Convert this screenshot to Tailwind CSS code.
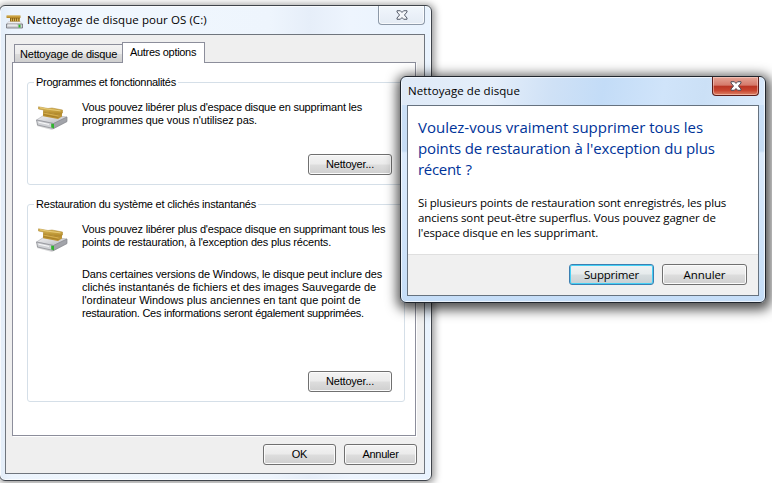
<!DOCTYPE html>
<html lang="fr">
<head>
<meta charset="utf-8">
<title>Nettoyage de disque</title>
<script src="https://cdn.jsdelivr.net/npm/@tailwindcss/browser@4"></script>
</head>
<body class="relative h-[483px] w-[772px] overflow-hidden bg-white font-['Liberation_Sans',sans-serif] text-[11px] leading-[13px] text-black">

<svg class="absolute h-0 w-0">
  <defs>
    <linearGradient id="metal" x1="0" y1="0" x2="1" y2="1"><stop offset="0" stop-color="#f4f4f6"/><stop offset="1" stop-color="#b9bbc0"/></linearGradient>
    <linearGradient id="brass" x1="0" y1="0" x2="0" y2="1"><stop offset="0" stop-color="#dfbd5c"/><stop offset="1" stop-color="#ad8424"/></linearGradient>
    <symbol id="drive" viewBox="0 0 32 24">
      <path d="M1 16v4l15 4 15-8v-4z" fill="#77797f" opacity=".3"/>
      <path d="M.5 14 9 8.500 31 11 17.500 17.500z" fill="url(#metal)" stroke="#b4b6bb" stroke-width=".7"/>
      <path d="M.5 14 17.500 17.500V22.500L1.500 19z" fill="#d0d2d6" stroke="#85878d" stroke-width=".7"/>
      <path d="M17.500 17.500 31 11V15.500L17.500 22.500z" fill="#a2a4aa" stroke="#85878d" stroke-width=".7"/>
      <path d="M2.500 16.200 13 18.400" stroke="#f9f9fa" stroke-width="1"/>
      <path d="M15.200 17.400 18 18v4.200l-2.800-.8z" fill="#2fb52d"/>
      <path d="M7 5.500 23 8.500 26 6.500V10.500L22 13 7 10.300z" fill="#bd9436"/>
      <path d="M7.500 8.600 22.500 11.500" stroke="#9c7520" stroke-width=".7"/>
      <path d="M7.500 7 22.500 10" stroke="#dcb857" stroke-width=".8"/>
      <path d="M2.500 .8 12 2.500 16 2 26.500 4V7L23 8.800 7.500 6 7.500 4 2.500 3z" fill="url(#brass)" stroke="#a9822c" stroke-width=".5"/>
      <path d="M4 1.700 12.500 3.300 24.500 4.900" stroke="#eed383" stroke-width=".8" fill="none"/>
    </symbol>
    <symbol id="drive-small" viewBox="0 0 17 14">
      <path d="M2.500 6.500h12l2 3H.500z" fill="#efeff1" stroke="#bcbec3" stroke-width=".5"/>
      <path d="M.500 9h16v4h-16z" fill="#cfd1d5" stroke="#6e7076" stroke-width=".8"/>
      <path d="M1.500 10h10" stroke="#fff"/>
      <path d="M12.500 9.700h2v2.800h-2z" fill="#2fb52d"/>
      <path d="M0.500.500h14v2.500h-14z" fill="#b98d2d"/>
      <path d="M1 1h13" stroke="#e4c165" stroke-width=".8"/>
      <path d="M4 3h10v3.500H4z" fill="#8c6618"/>
      <path d="M5.500 3.500v3M7.500 3.500v3M9.500 3.500v3M11.500 3.500v3M13.200 3.500v3" stroke="#e0bb5c" stroke-width=".9"/>
    </symbol>
    <symbol id="close" viewBox="0 0 13 11">
      <path d="M1 .8h3.700L6.500 2.700 8.300.8H12v1.400L9.200 5.500 12 8.800v1.400H8.300L6.500 8.300 4.700 10.200H1V8.800l2.800-3.300L1 2.200z" stroke-width="1.1" stroke-linejoin="round"/>
    </symbol>
  </defs>
</svg>

<!-- Main window -->
<main class="absolute -left-px top-[5px] flex h-[476px] w-[433px] flex-col rounded-[6px] border border-[#3f444b] bg-[linear-gradient(90deg,#e3edf8_0,#ecf4fd_12px,#f0f7fe_100px,#eef5fd_270px,#e6eef9_310px,#eef5fe_350px,#e9f3fe_100%)] pr-[6px] pb-[6px] pl-[5px] shadow-[1px_1px_7px_2px_rgba(0,0,0,0.38),inset_0_0_0_1px_rgba(255,255,255,0.7)]">
  <header class="flex h-[28px] shrink-0 items-start">
    <svg class="mt-[9px] ml-[1px] h-[14px] w-[17px]"><use href="#drive-small"/></svg>
    <h1 class="mt-[6px] ml-[4px] font-['Open_Sans',sans-serif] text-[11.5px] leading-4 tracking-[0.07px]">Nettoyage de disque pour OS (C:)</h1>
    <div class="ml-auto flex h-[19px] w-[47px] justify-center rounded-b-[4px] border border-t-0 border-[#8d99a8] bg-[linear-gradient(#f1f6fc,#e4ebf4)] pt-[4px] shadow-[inset_0_0_0_1px_rgba(255,255,255,0.7)]">
      <svg class="h-[10px] w-[12px] fill-[#f4f6f9] stroke-[#565d6b]"><use href="#close"/></svg>
    </div>
  </header>

  <section class="flex h-[440px] flex-col border border-[#6f757d] bg-[#efefef] px-[6px]">
    <nav class="relative z-10 mt-[7px] flex h-[21px] items-end pl-[2px]">
      <div class="mb-px h-[18px] w-[109px] border border-b-0 border-[#8c8e9b] bg-[linear-gradient(#f3f3f3_0,#ebebeb_50%,#dddddd_51%,#cfcfcf_100%)] pt-[3px] pl-[5px] tracking-[-0.2px] whitespace-nowrap">Nettoyage de disque</div>
      <div class="-ml-px h-[21px] w-[83px] border border-b-0 border-[#8c8e9b] bg-white pt-[3px] pl-[7px] tracking-[-0.3px] whitespace-nowrap">Autres options</div>
    </nav>
    <div class="-mt-px flex h-[374px] w-[404px] flex-col border border-[#8c8e9b] bg-white px-[14px] shadow-[1px_1px_0_#fff]">
      <fieldset class="mt-[13px] h-[109px] w-[378px] rounded-[3px] border border-[#d5dfe8]">
        <legend class="-mt-[7px] ml-[6px] block h-[13px] px-[2px] tracking-[-0.3px]">Programmes et fonctionnalités</legend>
        <div class="flex flex-col">
          <div class="mt-[12px] flex">
            <svg class="mt-[5px] ml-[8px] h-[24px] w-[32px] shrink-0"><use href="#drive"/></svg>
            <p class="ml-[14px] whitespace-nowrap"><span class="block tracking-[-0.205px]">Vous pouvez libérer plus d'espace disque en supprimant les</span><span class="block tracking-[-0.09px]">programmes que vous n'utilisez pas.</span></p>
          </div>
          <button class="mt-[24px] mr-[12px] h-[21px] w-[84px] self-end rounded-[3px] border border-[#707070] bg-[linear-gradient(#f3f3f3_0,#ebebeb_48%,#dddddd_52%,#cfcfcf_100%)] tracking-[-0.19px] shadow-[inset_0_0_0_1px_#fbfbfb]">Nettoyer...</button>
        </div>
      </fieldset>
      <fieldset class="mt-[13px] h-[204px] w-[378px] rounded-[3px] border border-[#d5dfe8]">
        <legend class="-mt-[7px] ml-[6px] block h-[13px] px-[2px] tracking-[-0.215px]">Restauration du système et clichés instantanés</legend>
        <div class="flex flex-col">
          <div class="mt-[12px] flex">
            <svg class="mt-[5px] ml-[8px] h-[24px] w-[32px] shrink-0"><use href="#drive"/></svg>
            <div class="ml-[14px] whitespace-nowrap">
              <p><span class="block tracking-[-0.2px]">Vous pouvez libérer plus d'espace disque en supprimant tous les</span><span class="block tracking-[-0.18px]">points de restauration, à l'exception des plus récents.</span></p>
              <p class="mt-[19px]"><span class="block tracking-[-0.18px]">Dans certaines versions de Windows, le disque peut inclure des</span><span class="block tracking-[-0.02px]">clichés instantanés de fichiers et des images Sauvegarde de</span><span class="block">l'ordinateur Windows plus anciennes en tant que point de</span><span class="block tracking-[-0.27px]">restauration. Ces informations seront également supprimées.</span></p>
            </div>
          </div>
          <button class="mt-[51px] mr-[12px] h-[21px] w-[84px] self-end rounded-[3px] border border-[#707070] bg-[linear-gradient(#f3f3f3_0,#ebebeb_48%,#dddddd_52%,#cfcfcf_100%)] tracking-[-0.19px] shadow-[inset_0_0_0_1px_#fbfbfb]">Nettoyer...</button>
        </div>
      </fieldset>
    </div>
    <footer class="mt-[8px] flex justify-end gap-[8px] pr-px">
      <button class="h-[21px] w-[73px] rounded-[3px] border border-[#707070] bg-[linear-gradient(#f3f3f3_0,#ebebeb_48%,#dddddd_52%,#cfcfcf_100%)] tracking-[-0.2px] shadow-[inset_0_0_0_1px_#fbfbfb]">OK</button>
      <button class="h-[21px] w-[73px] rounded-[3px] border border-[#707070] bg-[linear-gradient(#f3f3f3_0,#ebebeb_48%,#dddddd_52%,#cfcfcf_100%)] tracking-[-0.25px] shadow-[inset_0_0_0_1px_#fbfbfb]">Annuler</button>
    </footer>
  </section>
</main>

<!-- Confirmation dialog -->
<div role="dialog" class="absolute top-[76px] left-[400px] z-20 flex h-[227px] w-[366px] flex-col rounded-[6px] border border-[#20262e] bg-[linear-gradient(#cfe3f9_0,#c6dcf4_74px,#dcebfc_76px,#c5ddf7_100%)] px-[6px] pb-[6px] font-['Open_Sans',sans-serif] text-[11.5px] shadow-[1px_3px_12px_4px_rgba(0,0,0,0.68),inset_0_0_0_1px_rgba(255,255,255,0.65)]">
  <header class="-mx-[5px] mt-px flex h-[27px] shrink-0 items-start rounded-t-[4px] bg-[linear-gradient(100deg,#dfeaf7_0,#e4eefa_90px,#cfe1f6_150px,#c3dcf7_200px,#d0e4fa_260px,#cbe0f6_300px,#d9e9fb_100%)] pr-[5px] pl-[6px]">
    <h2 class="mt-[5px] leading-4 tracking-[0.08px]">Nettoyage de disque</h2>
    <div class="-mt-px ml-auto flex h-[19px] w-[47px] justify-center rounded-b-[4px] border border-t-0 border-[#5b1d1a] bg-[linear-gradient(#e5a597_0,#d5796a_46%,#b93524_50%,#c8452f_75%,#dd8468_100%)] pt-[4px] shadow-[inset_0_0_0_1px_rgba(255,220,210,0.5)]">
      <svg class="h-[10px] w-[12px] fill-white stroke-[#4d4a55]"><use href="#close"/></svg>
    </div>
  </header>
  <section class="flex h-[191px] flex-col border border-[#66727f] bg-white whitespace-nowrap">
    <div class="h-[148px] pt-[11px] pl-[10px]">
      <p class="text-[15px] leading-[21px] text-[#003399]"><span class="block tracking-[-0.01px]">Voulez-vous vraiment supprimer tous les</span><span class="block tracking-[-0.13px]">points de restauration à l'exception du plus</span><span class="block tracking-[-0.3px] [word-spacing:1px]">récent ?</span></p>
      <p class="mt-[15px] leading-[15px]"><span class="block tracking-[-0.18px]">Si plusieurs points de restauration sont enregistrés, les plus</span><span class="block tracking-[-0.11px]">anciens sont peut-être superflus. Vous pouvez gagner de</span><span class="block tracking-[-0.13px]">l'espace disque en les supprimant.</span></p>
    </div>
    <footer class="flex grow justify-end gap-[8px] border-t border-[#dfdfdf] bg-[#f0f0f0] pt-[9px] pr-[11px]">
      <button class="h-[21px] w-[85px] rounded-[3px] border border-[#3c7fb1] bg-[linear-gradient(#f0f3f4_0,#e6ebec_48%,#d6dddf_52%,#c8d0d3_100%)] leading-none tracking-[-0.2px] shadow-[inset_0_0_0_1px_#45d0f5]">Supprimer</button>
      <button class="h-[21px] w-[85px] rounded-[3px] border border-[#707070] bg-[linear-gradient(#f3f3f3_0,#ebebeb_48%,#dddddd_52%,#cfcfcf_100%)] leading-none tracking-[-0.07px] shadow-[inset_0_0_0_1px_#fbfbfb]">Annuler</button>
    </footer>
  </section>
</div>
</body>
</html>
